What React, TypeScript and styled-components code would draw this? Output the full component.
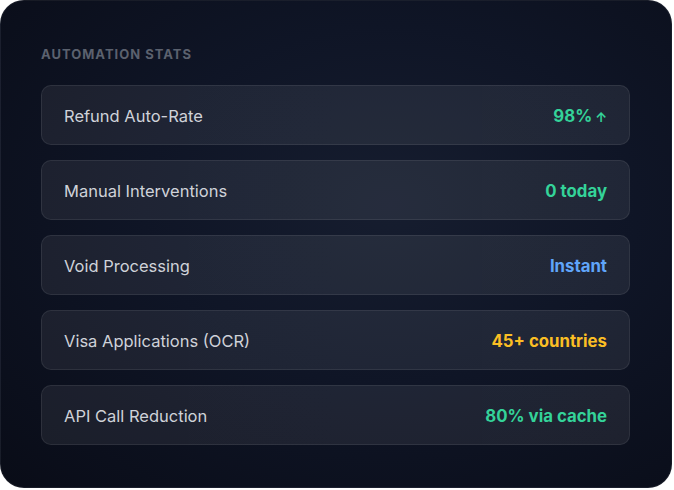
import styled, { createGlobalStyle } from 'styled-components';

const GlobalStyle = createGlobalStyle`
  * { box-sizing: border-box; }
  body {
    margin: 0;
    background: #ffffff;
    font-family: Inter, 'Noto Sans', sans-serif;
  }
`;

export const Card = styled.section`
  width: 672px;
  height: 488px;
  border-radius: 24px;
  padding: 45px 41px 43px 40px;
  background: radial-gradient(ellipse at 58% 42%, #161d2f 0%, #0f1526 45%, #090c17 100%);
  border: 1px solid rgba(255, 255, 255, 0.06);
  display: flex;
  flex-direction: column;
`;

export const Title = styled.h2`
  margin: 0 0 23px;
  font-size: 13px;
  line-height: 16px;
  font-weight: 700;
  letter-spacing: 1px;
  text-transform: uppercase;
  color: #5b616e;
`;

export const List = styled.div`
  display: flex;
  flex-direction: column;
  gap: 15px;
`;

export const Row = styled.div`
  height: 60px;
  display: flex;
  align-items: center;
  justify-content: space-between;
  padding: 1px 22px 0;
  border-radius: 10px;
  background: linear-gradient(90deg, rgba(255, 255, 255, 0.065), rgba(255, 255, 255, 0.075));
  border: 1px solid rgba(255, 255, 255, 0.08);
`;

export const Label = styled.span`
  font-size: 16.5px;
  color: #cfd2d9;
`;

// 값 색상은 tone 으로 지정
export const Value = styled.span<{ $tone: string }>`
  font-size: 16.8px;
  font-weight: 700;
  color: ${({ $tone }) => $tone};

  small {
    font-size: 13px;
    margin-left: 3px;
  }
`;

const stats = [
  { label: 'Refund Auto-Rate', value: '98%', arrow: true, tone: '#34d399' },
  { label: 'Manual Interventions', value: '0 today', tone: '#34d399' },
  { label: 'Void Processing', value: 'Instant', tone: '#60a5fa' },
  { label: 'Visa Applications (OCR)', value: '45+ countries', tone: '#fbbf24' },
  { label: 'API Call Reduction', value: '80% via cache', tone: '#34d399' },
];

export default function App() {
  return (
    <>
      <GlobalStyle />
      <Card>
        <Title>Automation Stats</Title>
        <List>
          {stats.map((s) => (
            <Row key={s.label}>
              <Label>{s.label}</Label>
              <Value $tone={s.tone}>
                {s.value}
                {s.arrow && <small>↑</small>}
              </Value>
            </Row>
          ))}
        </List>
      </Card>
    </>
  );
}
